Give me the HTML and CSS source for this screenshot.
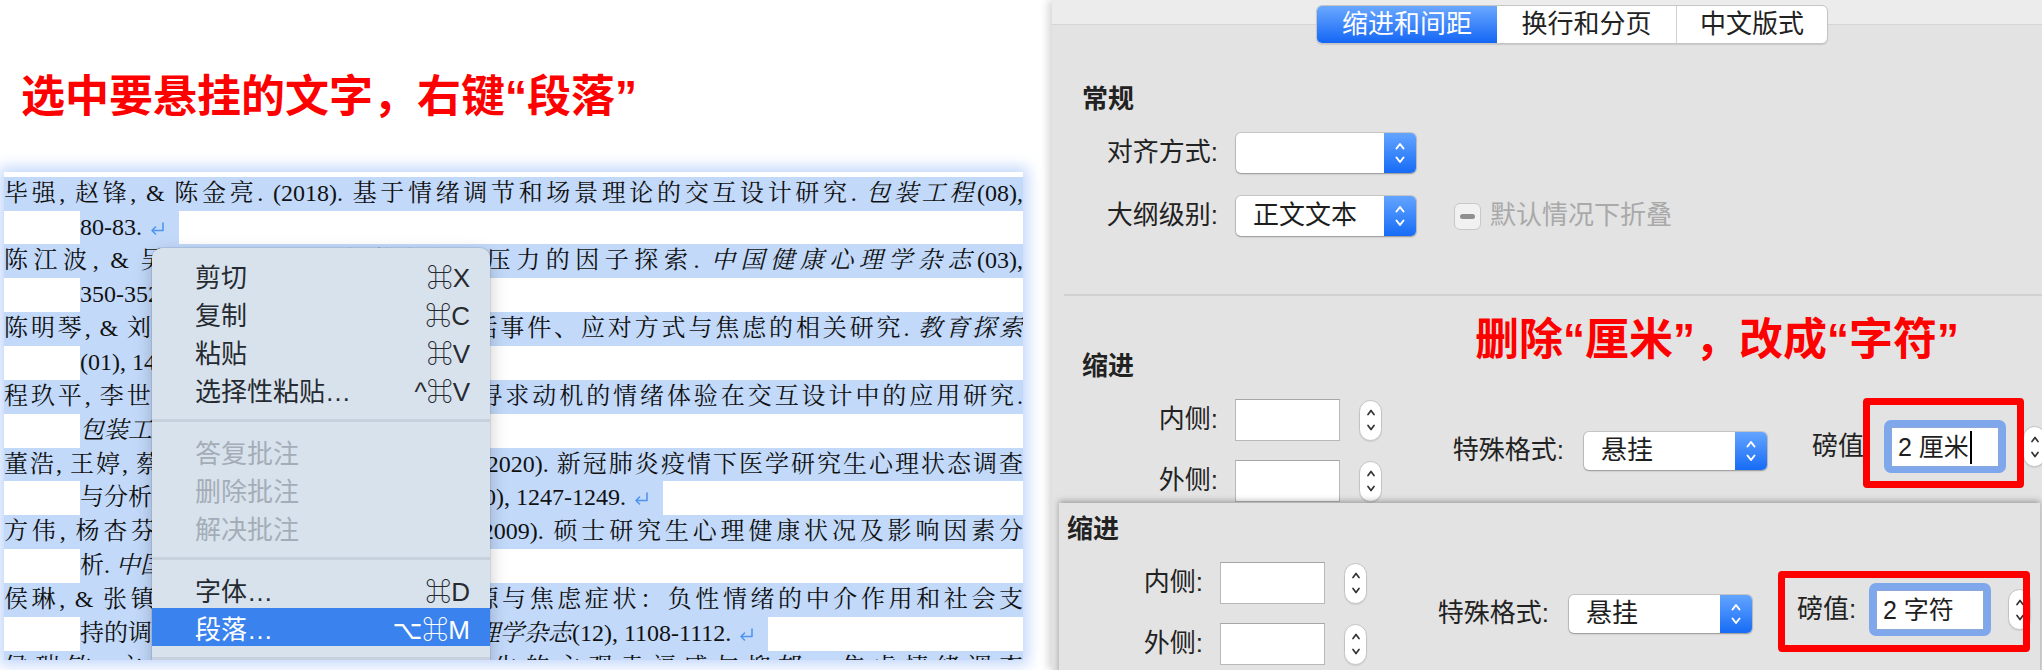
FILE: index.html
```html
<!DOCTYPE html>
<html lang="zh-CN">
<head>
<meta charset="utf-8">
<title>悬挂缩进</title>
<link rel="stylesheet" href="styles.css">
</head>
<body>
<div class="page">
  <section class="left">
    <h1 class="caption">选中要悬挂的文字，右键“段落”</h1>
    <div class="shot">
      <div class="doc">
        <p class="ln full">毕强, 赵锋, &amp; 陈金亮. (2018). 基于情绪调节和场景理论的交互设计研究. <i>包装工程</i>(08),</p>
        <p class="ln last"><span class="sel">80-83. <svg class="ret" width="16" height="14" viewBox="0 0 16 14"><path d="M14 1 V8.5 H3 M6.5 5 L3 8.5 L6.5 12" fill="none" stroke="#4f95f0" stroke-width="1.6" stroke-linecap="round" stroke-linejoin="round"/></svg></span></p>
        <p class="ln full">陈江波, &amp; 吴明证. (2008a). 大学生心理压力的因子探索. <i>中国健康心理学杂志</i>(03),</p>
        <p class="ln last"><span class="sel">350-352. <svg class="ret" width="16" height="14" viewBox="0 0 16 14"><path d="M14 1 V8.5 H3 M6.5 5 L3 8.5 L6.5 12" fill="none" stroke="#4f95f0" stroke-width="1.6" stroke-linecap="round" stroke-linejoin="round"/></svg></span></p>
        <p class="ln full">陈明琴, &amp; 刘永芳. (2009a). 高职大学生生活事件、应对方式与焦虑的相关研究. <i>教育探索</i></p>
        <p class="ln last"><span class="sel">(01), 140-141. <svg class="ret" width="16" height="14" viewBox="0 0 16 14"><path d="M14 1 V8.5 H3 M6.5 5 L3 8.5 L6.5 12" fill="none" stroke="#4f95f0" stroke-width="1.6" stroke-linecap="round" stroke-linejoin="round"/></svg></span></p>
        <p class="ln full">程玖平, 李世国, &amp; 欧阳秀芝. (2019). 感觉寻求动机的情绪体验在交互设计中的应用研究.</p>
        <p class="ln last"><span class="sel"><i>包装工程</i>(20), 45-48. <svg class="ret" width="16" height="14" viewBox="0 0 16 14"><path d="M14 1 V8.5 H3 M6.5 5 L3 8.5 L6.5 12" fill="none" stroke="#4f95f0" stroke-width="1.6" stroke-linecap="round" stroke-linejoin="round"/></svg></span></p>
        <p class="ln full">董浩, 王婷, 蔡雪琴, 欧阳建华, &amp; 王敏, 等. (2020). 新冠肺炎疫情下医学研究生心理状态调查</p>
        <p class="ln last"><span class="sel">与分析. <i>中华医学教育探索与研究</i>, 19(10), 1247-1249. <svg class="ret" width="16" height="14" viewBox="0 0 16 14"><path d="M14 1 V8.5 H3 M6.5 5 L3 8.5 L6.5 12" fill="none" stroke="#4f95f0" stroke-width="1.6" stroke-linecap="round" stroke-linejoin="round"/></svg></span></p>
        <p class="ln full">方伟, 杨杏芬, 黄俊杰, 刘健, &amp; 陈文华. (2009). 硕士研究生心理健康状况及影响因素分</p>
        <p class="ln last"><span class="sel">析. <i>中国学校卫生</i>(05), 62-64. <svg class="ret" width="16" height="14" viewBox="0 0 16 14"><path d="M14 1 V8.5 H3 M6.5 5 L3 8.5 L6.5 12" fill="none" stroke="#4f95f0" stroke-width="1.6" stroke-linecap="round" stroke-linejoin="round"/></svg></span></p>
        <p class="ln full">侯琳, &amp; 张镇宁. (2014). 大学新生的压力源与焦虑症状：负性情绪的中介作用和社会支</p>
        <p class="ln last"><span class="sel">持的调节和中介作用研究. <i>中国临床心理学杂志</i>(12), 1108-1112. <svg class="ret" width="16" height="14" viewBox="0 0 16 14"><path d="M14 1 V8.5 H3 M6.5 5 L3 8.5 L6.5 12" fill="none" stroke="#4f95f0" stroke-width="1.6" stroke-linecap="round" stroke-linejoin="round"/></svg></span></p>
        <p class="ln full">侯瑞敏, 文书锋, &amp; 王蕾. (2016). 研究生的主观幸福感与抑郁、焦虑情绪调查</p>
      </div>
      <div class="menu">
        <div class="mi"><span>剪切</span><span class="kb">⌘X</span></div>
        <div class="mi"><span>复制</span><span class="kb">⌘C</span></div>
        <div class="mi"><span>粘贴</span><span class="kb">⌘V</span></div>
        <div class="mi"><span>选择性粘贴…</span><span class="kb">^⌘V</span></div>
        <div class="msep"></div>
        <div class="mi dis"><span>答复批注</span></div>
        <div class="mi dis"><span>删除批注</span></div>
        <div class="mi dis"><span>解决批注</span></div>
        <div class="msep"></div>
        <div class="mi"><span>字体…</span><span class="kb">⌘D</span></div>
        <div class="mi hi"><span>段落…</span><span class="kb">⌥⌘M</span></div>
        <div class="msep"></div>
      </div>
    </div>
  </section>

  <section class="dialog">
    <div class="tabs">
      <span class="tab on">缩进和间距</span><span class="tab t2">换行和分页</span><span class="tab t3">中文版式</span>
    </div>
    <div class="general">
      <h2 class="hd">常规</h2>
      <div class="form">
        <label>对齐方式:</label>
        <div class="popup"><span class="ptxt"></span><span class="arr"><svg width="12" height="24" viewBox="0 0 12 24"><path d="M2.5 7.5 L6 3 L9.5 7.5 M2.5 16.5 L6 21 L9.5 16.5" fill="none" stroke="#fff" stroke-width="2" stroke-linecap="round" stroke-linejoin="round"/></svg></span></div>
        <label>大纲级别:</label>
        <div class="row2">
          <div class="popup"><span class="ptxt">正文文本</span><span class="arr"><svg width="12" height="24" viewBox="0 0 12 24"><path d="M2.5 7.5 L6 3 L9.5 7.5 M2.5 16.5 L6 21 L9.5 16.5" fill="none" stroke="#fff" stroke-width="2" stroke-linecap="round" stroke-linejoin="round"/></svg></span></div>
          <span class="check"><span class="dash"></span></span>
          <span class="dim">默认情况下折叠</span>
        </div>
      </div>
    </div>
    <div class="sep"></div>
    <div class="indent i1">
      <h2 class="hd">缩进</h2>
      <div class="irow">
        <div class="lr">
          <label>内侧:</label><span class="field"></span><span class="stepper"><svg width="10" height="24" viewBox="0 0 10 24"><path d="M2 6.5 L5 2.5 L8 6.5 M2 17.5 L5 21.5 L8 17.5" fill="none" stroke="#333" stroke-width="1.7" stroke-linecap="round" stroke-linejoin="round"/></svg></span>
          <label>外侧:</label><span class="field"></span><span class="stepper"><svg width="10" height="24" viewBox="0 0 10 24"><path d="M2 6.5 L5 2.5 L8 6.5 M2 17.5 L5 21.5 L8 17.5" fill="none" stroke="#333" stroke-width="1.7" stroke-linecap="round" stroke-linejoin="round"/></svg></span>
        </div>
        <div class="special">
          <label>特殊格式:</label>
          <div class="popup wide"><span class="ptxt">悬挂</span><span class="arr"><svg width="12" height="24" viewBox="0 0 12 24"><path d="M2.5 7.5 L6 3 L9.5 7.5 M2.5 16.5 L6 21 L9.5 16.5" fill="none" stroke="#fff" stroke-width="2" stroke-linecap="round" stroke-linejoin="round"/></svg></span></div>
        </div>
        <div class="value">
          <label>磅值:</label>
          <span class="ring"><span class="inp">2 厘米<b class="caret"></b></span></span>
          <span class="stepper"><svg width="10" height="24" viewBox="0 0 10 24"><path d="M2 6.5 L5 2.5 L8 6.5 M2 17.5 L5 21.5 L8 17.5" fill="none" stroke="#333" stroke-width="1.7" stroke-linecap="round" stroke-linejoin="round"/></svg></span>
          <span class="redbox rb1"></span>
        </div>
      </div>
    </div>
    <p class="note">删除“厘米”，改成“字符”</p>
  </section>

  <section class="panel2">
    <div class="indent i2">
      <h2 class="hd">缩进</h2>
      <div class="irow">
        <div class="lr">
          <label>内侧:</label><span class="field"></span><span class="stepper"><svg width="10" height="24" viewBox="0 0 10 24"><path d="M2 6.5 L5 2.5 L8 6.5 M2 17.5 L5 21.5 L8 17.5" fill="none" stroke="#333" stroke-width="1.7" stroke-linecap="round" stroke-linejoin="round"/></svg></span>
          <label>外侧:</label><span class="field"></span><span class="stepper"><svg width="10" height="24" viewBox="0 0 10 24"><path d="M2 6.5 L5 2.5 L8 6.5 M2 17.5 L5 21.5 L8 17.5" fill="none" stroke="#333" stroke-width="1.7" stroke-linecap="round" stroke-linejoin="round"/></svg></span>
        </div>
        <div class="special">
          <label>特殊格式:</label>
          <div class="popup wide"><span class="ptxt">悬挂</span><span class="arr"><svg width="12" height="24" viewBox="0 0 12 24"><path d="M2.5 7.5 L6 3 L9.5 7.5 M2.5 16.5 L6 21 L9.5 16.5" fill="none" stroke="#fff" stroke-width="2" stroke-linecap="round" stroke-linejoin="round"/></svg></span></div>
        </div>
        <div class="value">
          <label>磅值:</label>
          <span class="ring"><span class="inp">2 字符</span></span>
          <span class="stepper"><svg width="10" height="24" viewBox="0 0 10 24"><path d="M2 6.5 L5 2.5 L8 6.5 M2 17.5 L5 21.5 L8 17.5" fill="none" stroke="#333" stroke-width="1.7" stroke-linecap="round" stroke-linejoin="round"/></svg></span>
          <span class="redbox rb2"></span>
        </div>
      </div>
    </div>
  </section>
</div>
</body>
</html>
```

FILE: styles.css
```css
* { box-sizing: border-box; }
html, body { margin: 0; padding: 0; }
body {
  width: 2042px;
  height: 670px;
  overflow: hidden;
  background: #fff;
  font-family: "Liberation Sans", "Noto Sans CJK SC", sans-serif;
}
.page {
  position: relative;
  display: flex;
  width: 2042px;
  height: 670px;
}

/* ---------- left: document screenshot ---------- */
.left { width: 1052px; flex: none; }
.caption {
  margin: 75px 0 0 0;
  padding-left: 21px;
  font: 700 44px/44px "Liberation Sans", "Noto Sans CJK SC", sans-serif;
  color: #fe0000;
}
.shot {
  position: relative;
  width: 1019px;
  height: 488px;
  margin: 53px 0 0 4px;
  overflow: hidden;
  background: #fff;
  box-shadow: 0 0 14px 5px #c3d7fb;
}
.doc {
  padding-top: 4.7px;
  font: 24px/33.86px "Liberation Serif", "Noto Serif CJK SC", "Noto Sans CJK SC", serif;
  color: #111;
}
.ln { margin: 0; height: 33.86px; overflow: hidden; }
.full { background: #c2d9fa; text-align: justify; text-align-last: justify; }
.last { padding-left: 76px; }
.sel { display: inline-block; background: #c2d9fa; padding-right: 14px; }
.ret { vertical-align: -1px; margin-left: 1px; }

.menu {
  position: absolute;
  left: 148px;
  top: 76px;
  width: 338px;
  height: 440px;
  padding-top: 8px;
  background: #d8e2ed;
  border-radius: 10px;
  box-shadow: 0 0 0 1px rgba(0,0,0,0.08), 0 6px 18px rgba(0,0,0,0.22);
  font: 26px "Liberation Sans", "Noto Sans CJK SC", "DejaVu Sans", sans-serif;
  color: #262b31;
}
.mi {
  height: 38px;
  display: flex;
  align-items: center;
  justify-content: space-between;
  padding: 0 20px 0 43px;
}
.mi.dis { color: #a4adb7; }
.mi.hi { background: #3a83ee; color: #fff; }
.msep { height: 24px; display: flex; align-items: center; }
.msep::before { content: ""; flex: 1; height: 3px; background: #c6d1dd; }

/* ---------- right: paragraph dialog ---------- */
.dialog {
  position: relative;
  flex: 1;
  background: linear-gradient(#ececec 0 24px, #d6d6d6 24px 25px, #e3e3e3 25px);
  box-shadow: -4px 0 8px rgba(0,0,0,0.16);
  font: 26px/1.2 "Liberation Sans", "Noto Sans CJK SC", sans-serif;
  color: #222;
}
.tabs {
  display: inline-flex;
  margin: 5px 0 0 264px;
  height: 39px;
  border: 1px solid #c5c5c5;
  border-radius: 6px;
  background: #fff;
  overflow: hidden;
  box-shadow: 0 1px 1px rgba(0,0,0,0.12);
}
.tab {
  display: flex;
  align-items: center;
  justify-content: center;
  width: 179px;
  color: #222;
}
.tab.on { width: 180px; color: #fff; background: linear-gradient(#6aa8ff, #1466f5); }
.tab.t3 { width: 151px; border-left: 1px solid #d2d2d2; }
.hd { margin: 0; font-size: 26px; line-height: 26px; font-weight: 700; color: #222; }
.general { margin-top: 42px; padding-left: 30px; }
.form {
  display: grid;
  grid-template-columns: 136px auto;
  column-gap: 18px;
  row-gap: 23px;
  align-items: center;
  margin-top: 21px;
}
.form label, .lr label, .special label { text-align: right; }
.row2 { display: flex; align-items: center; }
.popup {
  display: flex;
  align-items: center;
  width: 180px;
  height: 40px;
  background: #fff;
  border-radius: 5px;
  box-shadow: 0 0 0 1px rgba(0,0,0,0.12), 0 1px 2px rgba(0,0,0,0.25);
}
.popup.wide { width: 183px; height: 38px; }
.ptxt { flex: 1; padding-left: 17px; color: #1e1e1e; }
.arr {
  flex: none;
  width: 32px;
  align-self: stretch;
  display: flex;
  align-items: center;
  justify-content: center;
  border-radius: 0 5px 5px 0;
  background: linear-gradient(#63a4ff, #176cf6);
}
.check {
  display: flex;
  align-items: center;
  justify-content: center;
  width: 27px;
  height: 27px;
  margin-left: 38px;
  border: 1px solid #c8c8c8;
  border-radius: 6px;
  background: #f1f1f1;
}
.dash { width: 15px; height: 5px; border-radius: 3px; background: #8f8f8f; }
.dim { margin-left: 9px; color: #a9a9a9; }
.sep { margin: 58px 0 0 12px; height: 2px; background: #d1d1d1; }

.indent.i1 { margin-top: 57px; padding-left: 30px; }
.irow { display: flex; align-items: center; margin-top: 20px; }
.lr {
  display: grid;
  grid-template-columns: 136px 122px 42px;
  grid-template-rows: 42px 42px;
  row-gap: 19px;
  align-items: center;
}
.lr .field { margin-left: 17px; }
.lr .stepper { margin-left: 19px; }
.field {
  display: block;
  width: 105px;
  height: 42px;
  background: #fff;
  border: 1px solid #b8b8b8;
  border-top-color: #a6a6a6;
}
.stepper {
  display: flex;
  align-items: center;
  justify-content: center;
  width: 23px;
  height: 41px;
  background: #fff;
  border: 1px solid #c3c3c3;
  border-radius: 12px;
  box-shadow: 0 1px 1px rgba(0,0,0,0.08);
}
.special {
  display: grid;
  grid-template-columns: 182px 183px;
  column-gap: 20px;
  align-items: center;
}
.value {
  position: relative;
  display: flex;
  align-items: center;
  margin-left: 45px;
  margin-bottom: 8px;
}
.value label { width: 72px; }
.ring {
  display: block;
  width: 122px;
  height: 53px;
  padding: 7px 7px 6px 7px;
  border-radius: 7px;
  background: #7ea7ec;
}
.inp {
  display: flex;
  align-items: center;
  height: 40px;
  padding-left: 6px;
  background: #fff;
  border: 1px solid #8ca8da;
  font-size: 25px;
  color: #1e1e1e;
}
.caret { display: inline-block; width: 2px; height: 33px; margin-left: 1px; background: #000; }
.value .stepper { margin-left: 17px; }
.redbox {
  position: absolute;
  border: 7px solid #fe0000;
  border-radius: 4px;
}
.rb1 { left: 51px; top: -22px; width: 161px; height: 90px; }
.rb2 { left: -19px; top: -12px; width: 252px; height: 81px; }
.note {
  position: absolute;
  left: 423px;
  top: 318px;
  margin: 0;
  font: 700 44px/44px "Liberation Sans", "Noto Sans CJK SC", sans-serif;
  color: #fe0000;
  white-space: nowrap;
}

.panel2 {
  position: absolute;
  left: 1059px;
  top: 503px;
  width: 981px;
  height: 200px;
  padding: 13px 0 0 8px;
  background: #e3e3e3;
  box-shadow: 0 -2px 6px rgba(0,0,0,0.3);
  font: 26px/1.2 "Liberation Sans", "Noto Sans CJK SC", sans-serif;
  color: #222;
}
```
